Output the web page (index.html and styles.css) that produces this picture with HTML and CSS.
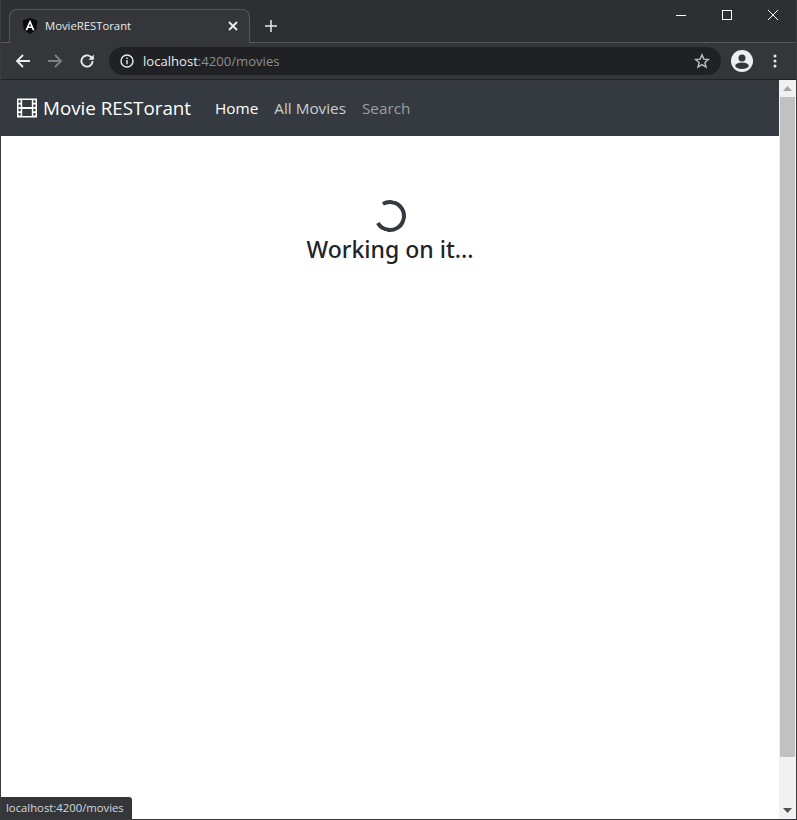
FILE: index.html
```html
<!DOCTYPE html>
<html lang="en">
<head>
<meta charset="utf-8">
<title>MovieRESTorant</title>
<link rel="stylesheet" href="styles.css">
</head>
<body>
<div class="window">
  <header class="tabstrip">
    <div class="tab">
      <svg class="favicon" viewBox="0 0 16 16" width="16" height="16"><path d="M8 0 .6 2.500l1.200 9.500L8 16l6.200-4 1.200-9.500z" fill="#0b0b0d"/><path d="M8 1.800 3.400 12.200h1.900l.9-2.300h3.600l.9 2.300h1.900zM6.900 8.400 8 5.600l1.100 2.800z" fill="#fff"/></svg>
      <span class="tab-title">MovieRESTorant</span>
      <svg class="tab-close" viewBox="0 0 10 10" width="10" height="10"><path d="M1 1l8 8M9 1l-8 8" stroke="#f0f0f0" stroke-width="1.800" fill="none"/></svg>
    </div>
    <svg class="new-tab" viewBox="0 0 12 12" width="12" height="12"><path d="M6 0v12M0 6h12" stroke="#e8eaed" stroke-width="1.500" fill="none"/></svg>
    <div class="win-controls">
      <svg viewBox="0 0 10 10" width="10" height="10"><path d="M0 5.500h10" stroke="#fff" fill="none"/></svg>
      <svg viewBox="0 0 10 10" width="10" height="10"><rect x=".5" y=".5" width="9" height="9" stroke="#fff" fill="none"/></svg>
      <svg viewBox="0 0 10 10" width="10" height="10"><path d="M0 0l10 10M10 0 0 10" stroke="#fff" fill="none"/></svg>
    </div>
  </header>
  <div class="toolbar">
    <svg class="tool" viewBox="0 0 16 16" width="16" height="16"><path d="M15 8H2M8 2 2 8l6 6" stroke="#e8eaed" stroke-width="1.900" fill="none"/></svg>
    <svg class="tool" viewBox="0 0 16 16" width="16" height="16"><path d="M1 8h13M8 2l6 6-6 6" stroke="#7d7f82" stroke-width="1.900" fill="none"/></svg>
    <svg class="tool" viewBox="0 0 16 16" width="16" height="16"><path d="M13.600 8a5.600 5.600 0 1 1-1.700-4L14 6" stroke="#e8eaed" stroke-width="1.900" fill="none"/><path d="M14.800 1.500v5.300H9.500z" fill="#e8eaed"/></svg>
    <div class="omnibox">
      <svg class="info" viewBox="0 0 14 14" width="14" height="14"><circle cx="7" cy="7" r="6" stroke="#e8eaed" stroke-width="1.400" fill="none"/><path d="M7 6v4.200M7 3.500v1.400" stroke="#e8eaed" stroke-width="1.400" fill="none"/></svg>
      <span class="url"><span class="host">localhost</span>:4200/movies</span>
      <svg class="star" viewBox="0 0 16 16" width="16" height="16"><path d="M8 1.800l1.800 4.300 4.600.4-3.500 3 1.100 4.500L8 11.600 4 14l1.100-4.500-3.500-3 4.600-.4z" stroke="#bdc1c6" stroke-width="1.400" fill="none"/></svg>
    </div>
    <svg class="avatar" viewBox="0 0 22 22" width="22" height="22"><circle cx="11" cy="11" r="11" fill="#eceef0"/><circle cx="11" cy="8" r="3.500" fill="#35363a"/><ellipse cx="11" cy="15.800" rx="6.800" ry="3.200" fill="#35363a"/></svg>
    <svg class="menu" viewBox="0 0 4 14" width="4" height="14"><circle cx="2" cy="2" r="1.500" fill="#e8eaed"/><circle cx="2" cy="7" r="1.500" fill="#e8eaed"/><circle cx="2" cy="12" r="1.500" fill="#e8eaed"/></svg>
  </div>
  <div class="viewport">
    <div class="page">
      <nav class="navbar">
        <a class="brand">
          <svg class="film" viewBox="0 0 20 20" width="20" height="20"><path fill-rule="evenodd" fill="#fff" d="M0 .5h20v19H0zM1.500 2.300v2.400h2.200V2.300zM1.500 6.500v2.400h2.200V6.500zM1.500 10.800v2.400h2.200v-2.400zM1.500 15v2.400h2.200V15zM16.300 2.300v2.400h2.200V2.300zM16.300 6.500v2.400h2.200V6.500zM16.300 10.800v2.400h2.200v-2.400zM16.300 15v2.400h2.200V15zM5.200 2v7h9.600V2zM5.200 11v7h9.600v-7z"/></svg>
          <span>Movie RESTorant</span>
        </a>
        <a class="nav-link active">Home</a>
        <a class="nav-link">All Movies</a>
        <a class="nav-link dim">Search</a>
      </nav>
      <main class="loading">
        <div class="spinner"></div>
        <h3 class="working">Working on it...</h3>
      </main>
    </div>
    <div class="scrollbar">
      <svg class="arrow" viewBox="0 0 9 5" width="9" height="5"><path d="M4.500 0 9 5H0z" fill="#a3a3a3"/></svg>
      <div class="thumb"></div>
      <svg class="arrow" viewBox="0 0 9 5" width="9" height="5"><path d="M0 0h9L4.500 5z" fill="#505050"/></svg>
    </div>
  </div>
  <div class="status">localhost:4200/movies</div>
</div>
</body>
</html>
```
FILE: styles.css
```css
* { box-sizing: border-box; }
html, body { margin: 0; height: 100%; overflow: hidden; }
body { font-family: "Open Sans", "Noto Sans", sans-serif; background: #fff; }
.window {
  position: relative;
  width: 797px;
  height: 820px;
  display: flex;
  flex-direction: column;
  border: 1px solid #3a3b3e;
  border-top: 0;
  overflow: hidden;
}
.tabstrip {
  height: 43px;
  flex: none;
  display: flex;
  align-items: flex-end;
  padding-left: 8px;
  background: #2c3033;
  border-bottom: 1px solid #56585b;
}
.tab {
  width: 241px;
  height: 34px;
  margin-bottom: -1px;
  display: flex;
  align-items: center;
  padding: 0 11px 2px 12px;
  background: #35363a;
  border: 1px solid #56585b;
  border-bottom: 0;
  border-radius: 8px 8px 0 0;
}
.favicon { flex: none; }
.tab-title { margin-left: 7px; flex: 1; font-size: 11.300px; color: #e8eaed; white-space: nowrap; }
.new-tab { margin: 0 0 10px 15px; }
.win-controls { margin-left: auto; align-self: flex-start; display: flex; gap: 36px; padding: 10px 18px 0 0; }
.toolbar {
  height: 37px;
  flex: none;
  display: flex;
  align-items: center;
  padding-left: 14px;
  background: #35363a;
  border-bottom: 1px solid #202124;
}
.tool { flex: none; margin-right: 16px; }
.omnibox {
  width: 612px;
  height: 28px;
  margin-left: -2px;
  display: flex;
  align-items: center;
  padding: 0 11px 0 11px;
  background: #202124;
  border-radius: 14px;
}
.url { margin-left: 9px; flex: 1; font-size: 13.100px; color: #8c8e91; }
.host { color: #e8eaed; }
.avatar { margin-left: 10px; flex: none; }
.menu { margin-left: 20px; flex: none; }
.viewport { flex: 1; min-height: 0; display: flex; }
.page { flex: 1; min-width: 0; }
.navbar {
  height: 56px;
  display: flex;
  align-items: center;
  padding: 0 16px;
  background: #343a40;
}
.brand { display: flex; align-items: center; margin-right: 16px; font-size: 18.800px; color: #fff; }
.film { margin-right: 6px; }
.nav-link { padding: 0 8px; font-size: 15.300px; color: rgba(255,255,255,.75); }
.nav-link.active { color: #fff; }
.nav-link.dim { color: rgba(255,255,255,.5); }
.loading { display: flex; flex-direction: column; align-items: center; padding-top: 64px; }
.spinner {
  width: 32px;
  height: 32px;
  border: 4px solid #343a40;
  border-right-color: transparent;
  border-radius: 50%;
  transform: rotate(195deg);
}
.working { margin: 3px 0 0; font-family: "Noto Sans", sans-serif; font-size: 23px; font-weight: 500; line-height: 29px; color: #212529; }
.scrollbar {
  width: 17px;
  flex: none;
  display: flex;
  flex-direction: column;
  align-items: center;
  background: #f1f1f1;
}
.arrow { flex: none; margin: 6px 0; }
.thumb { width: 15px; height: 660px; margin-bottom: auto; background: #c1c1c1; }
.status {
  position: absolute;
  left: 0;
  bottom: 0;
  height: 22px;
  width: 131px;
  padding: 0 0 0 5px;
  font-size: 11.300px;
  line-height: 22px;
  color: #d6d8da;
  background: #35363a;
  border-radius: 0 3px 0 0;
}
```
